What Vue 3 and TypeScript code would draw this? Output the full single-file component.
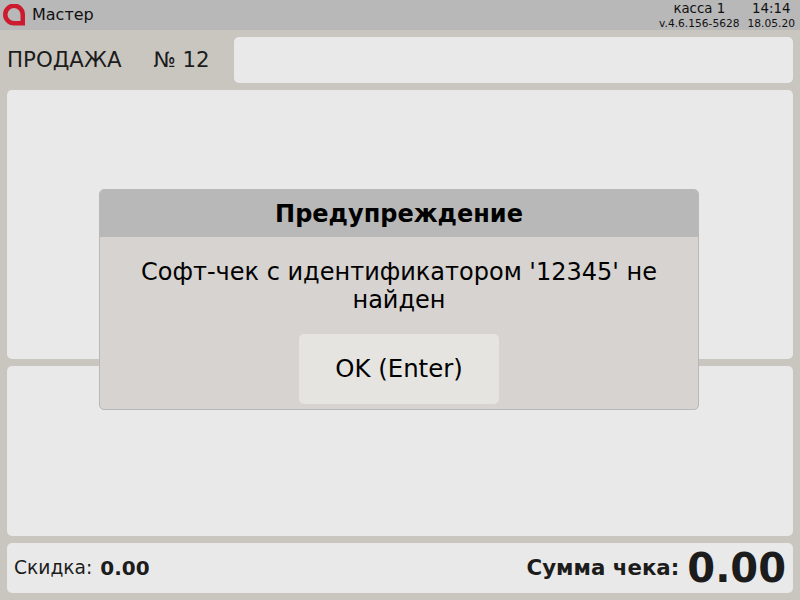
<script setup lang="ts">
const title = 'Предупреждение'
</script>

<template>
  <div class="screen">
    <header class="topbar">
      <div class="brand">
        <svg class="logo" width="22" height="22" viewBox="0 0 22 22">
          <path d="M11 1.750a8.750 8.750 0 0 0 0 17.500h8.750V10.500A8.750 8.750 0 0 0 11 1.750z" fill="none" stroke="#cc1a2e" stroke-width="4.500" />
        </svg>
        <span class="brand-name">Мастер</span>
      </div>
      <div class="status">
        <div class="status-col">
          <span class="status-main">касса 1</span>
          <span class="status-sub">v.4.6.156-5628</span>
        </div>
        <div class="status-col">
          <span class="status-main">14:14</span>
          <span class="status-sub">18.05.20</span>
        </div>
      </div>
    </header>

    <main class="content">
      <div class="sale-row">
        <div class="sale-title">
          <span>ПРОДАЖА</span>
          <span>№ 12</span>
        </div>
        <div class="panel sale-input"></div>
      </div>
      <div class="panel list"></div>
      <div class="panel details"></div>
      <footer class="panel totals">
        <div class="discount">
          <span>Скидка:</span>
          <b>0.00</b>
        </div>
        <div class="sum">
          <b class="sum-label">Сумма чека:</b>
          <b class="sum-value">0.00</b>
        </div>
      </footer>
    </main>

    <div class="dialog">
      <div class="dialog-head">{{ title }}</div>
      <div class="dialog-body">
        <p class="dialog-text">Софт-чек с идентификатором '12345' не найден</p>
        <button class="dialog-btn" type="button">OK (Enter)</button>
      </div>
    </div>
  </div>
</template>

<style scoped>
.screen {
  position: relative;
  width: 800px;
  height: 600px;
  overflow: hidden;
  background: #c9c6c0;
  color: #1c1c1c;
  font-family: "DejaVu Sans", sans-serif;
}
.topbar {
  height: 30px;
  background: #b8b8b8;
  display: flex;
  justify-content: space-between;
  align-items: center;
}
.brand {
  display: flex;
  align-items: center;
  gap: 7px;
  padding-left: 3px;
}
.logo {
  display: block;
}
.brand-name {
  font-size: 16px;
  line-height: 29px;
  height: 30px;
  color: #111;
}
.status {
  display: flex;
  gap: 8px;
  padding-right: 5px;
}
.status-col {
  display: flex;
  flex-direction: column;
  align-items: center;
  color: #111;
}
.status-main {
  margin-top: 1px;
  font-size: 13.33px;
  line-height: 16px;
}
.status-sub {
  font-size: 10.67px;
  line-height: 13px;
}
.content {
  display: flex;
  flex-direction: column;
  gap: 7px;
  padding: 7px;
}
.panel {
  background: #e9e9e9;
  border-radius: 5px;
}
.sale-row {
  display: flex;
  height: 46px;
}
.sale-title {
  width: 227px;
  display: flex;
  gap: 32px;
  align-items: center;
  padding-bottom: 2px;
  box-sizing: border-box;
  font-size: 21.33px;
}
.sale-input {
  flex: 1;
}
.list {
  height: 269px;
}
.details {
  height: 170px;
}
.totals {
  height: 50px;
  display: flex;
  justify-content: space-between;
  align-items: center;
  padding: 0 7px;
}
.discount {
  display: flex;
  align-items: center;
  gap: 8px;
  font-size: 18.67px;
  padding-bottom: 1px;
}
.discount b {
  font-size: 20px;
}
.sum {
  display: flex;
  align-items: center;
  gap: 8px;
}
.sum-label {
  font-size: 21.33px;
  padding-bottom: 1px;
}
.sum-value {
  font-size: 40px;
  line-height: 50px;
}
.dialog {
  position: absolute;
  left: 99px;
  top: 189px;
  width: 600px;
  height: 221px;
  box-sizing: border-box;
  border: 1px solid #b8b8b8;
  border-radius: 5px;
  overflow: hidden;
  background: #d6d3d0;
  color: #000;
}
.dialog-head {
  height: 47px;
  background: #b8b8b8;
  font-size: 24px;
  font-weight: 700;
  line-height: 48px;
  text-align: center;
}
.dialog-body {
  display: flex;
  flex-direction: column;
  align-items: center;
}
.dialog-text {
  margin: 21px 0 0;
  width: 540px;
  font-size: 24px;
  line-height: 28px;
  text-align: center;
}
.dialog-btn {
  margin-top: 20px;
  width: 200px;
  height: 70px;
  border: 0;
  border-radius: 5px;
  background: #e6e4e1;
  color: #000;
  font-family: inherit;
  font-size: 24.4px;
  padding: 0 0 2px;
}
</style>
